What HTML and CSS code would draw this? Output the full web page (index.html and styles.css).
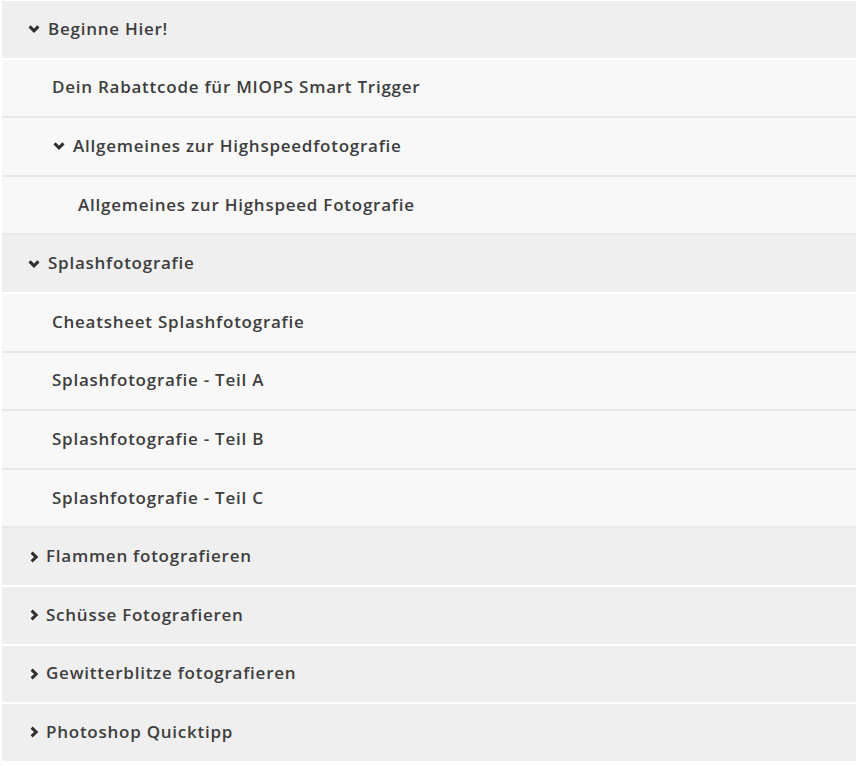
FILE: index.html
```html
<!DOCTYPE html>
<html lang="de">
<head>
<meta charset="utf-8">
<link rel="stylesheet" href="styles.css">
</head>
<body>
<ul class="menu">
  <li class="row top open"><span class="chev down"><svg viewBox="0 0 10 10"><path d="M1.3 2.8 L5 6.6 L8.7 2.8"/></svg></span><span class="label">Beginne Hier!</span></li>
  <li class="row sub l1"><span class="label">Dein Rabattcode für MIOPS Smart Trigger</span></li>
  <li class="row sub l1 nest"><span class="chev down"><svg viewBox="0 0 10 10"><path d="M1.3 2.8 L5 6.6 L8.7 2.8"/></svg></span><span class="label">Allgemeines zur Highspeedfotografie</span></li>
  <li class="row sub l2"><span class="label">Allgemeines zur Highspeed Fotografie</span></li>
  <li class="row top open"><span class="chev down"><svg viewBox="0 0 10 10"><path d="M1.3 2.8 L5 6.6 L8.7 2.8"/></svg></span><span class="label">Splashfotografie</span></li>
  <li class="row sub l1"><span class="label">Cheatsheet Splashfotografie</span></li>
  <li class="row sub l1"><span class="label">Splashfotografie - Teil A</span></li>
  <li class="row sub l1"><span class="label">Splashfotografie - Teil B</span></li>
  <li class="row sub l1"><span class="label">Splashfotografie - Teil C</span></li>
  <li class="row top closed"><span class="chev right"><svg viewBox="0 0 10 10"><path d="M3 1.3 L6.8 5 L3 8.7"/></svg></span><span class="label">Flammen fotografieren</span></li>
  <li class="row top closed"><span class="chev right"><svg viewBox="0 0 10 10"><path d="M3 1.3 L6.8 5 L3 8.7"/></svg></span><span class="label">Schüsse Fotografieren</span></li>
  <li class="row top closed"><span class="chev right"><svg viewBox="0 0 10 10"><path d="M3 1.3 L6.8 5 L3 8.7"/></svg></span><span class="label">Gewitterblitze fotografieren</span></li>
  <li class="row top closed"><span class="chev right"><svg viewBox="0 0 10 10"><path d="M3 1.3 L6.8 5 L3 8.7"/></svg></span><span class="label">Photoshop Quicktipp</span></li>
</ul>
</body>
</html>
```
FILE: styles.css
```css
html, body {
  margin: 0;
  padding: 0;
  background: #ffffff;
}
body {
  padding: 1px 2px 0 2px;
  font-family: "Open Sans", "Liberation Sans", sans-serif;
  color: #3e3e3e;
}
.menu {
  list-style: none;
  margin: 0;
  padding: 0;
}
.row {
  display: flex;
  align-items: center;
  height: 56.6px;
  font-size: 17px;
  font-weight: 600;
  letter-spacing: 0.75px;
}
.top {
  background: #efefef;
  border-bottom: 2px solid #ffffff;
  padding-left: 26px;
}
.sub {
  background: #f8f8f8;
  border-bottom: 2px solid #e8e8e8;
}
.l1 { padding-left: 50px; }
.l1.nest { padding-left: 51px; }
.l2 { padding-left: 76px; }
.label {
  white-space: nowrap;
  padding-bottom: 2px;
}
.chev {
  display: inline-flex;
  width: 12px;
  height: 12px;
  margin-right: 8px;
}
.chev.right { margin-right: 6px; }
.chev svg {
  width: 12px;
  height: 12px;
  fill: none;
  stroke: #2e2e2e;
  stroke-width: 2.5;
  stroke-linecap: butt;
}
```
